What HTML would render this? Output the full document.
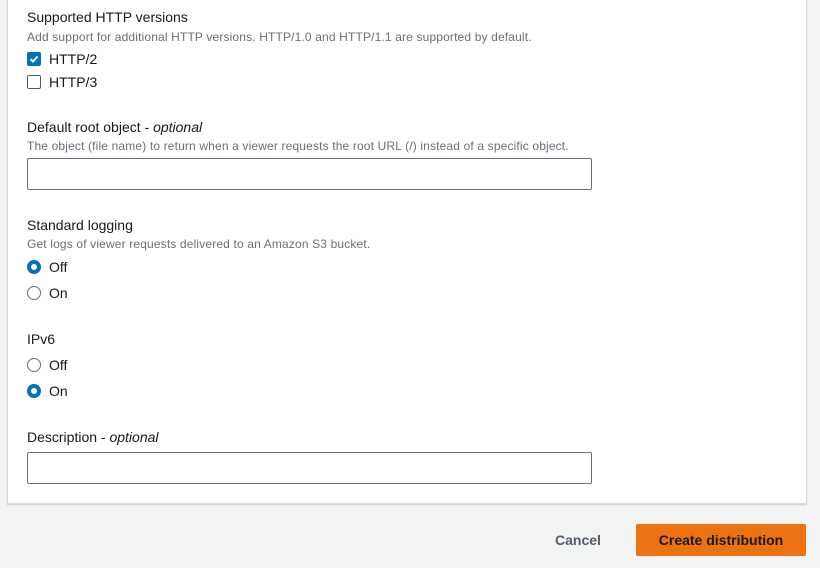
<!DOCTYPE html>
<html><head><style>
body{margin:0;width:820px;height:568px;background:#f2f3f3;font-family:"Liberation Sans",sans-serif;position:relative;overflow:hidden;color:#16191f}
.card{position:absolute;left:7px;top:-2px;width:798px;height:505px;background:#fff;border:1px solid #d5dbdb;border-top:none;box-shadow:0 1px 1px rgba(0,0,0,.15)}
.t{position:absolute;left:27px;font-size:14px;color:#16191f}
.d{position:absolute;left:27px;font-size:12px;color:#687078;letter-spacing:0.15px}
.l{position:absolute;left:49px;font-size:14px}
.cb{position:absolute;left:27px;width:12px;height:12px;border:1px solid #545b64;border-radius:2px;background:#fff}
.cb.on{background:#0073bb;border-color:#0073bb}
.rd{position:absolute;left:27px;width:12px;height:12px;border:1px solid #687078;border-radius:50%;background:#fff}
.rd.on{border:4px solid #0073bb;width:6px;height:6px}
.in{position:absolute;left:27px;width:563px;height:30px;border:1px solid #687078;border-radius:2px;background:#fff}
i{font-style:italic}
</style></head><body>
<div class="card"></div>
<div class="t" style="top:9px">Supported HTTP versions</div>
<div class="d" style="top:30px">Add support for additional HTTP versions. HTTP/1.0 and HTTP/1.1 are supported by default.</div>
<div class="cb on" style="top:52px"><svg width="12" height="12" viewBox="0 0 12 12" style="position:absolute;left:0;top:0"><path d="M2.5 6.2 L5 8.6 L9.6 3.4" stroke="#fff" stroke-width="2" fill="none"/></svg></div>
<div class="l" style="top:51px">HTTP/2</div>
<div class="cb" style="top:75px"></div>
<div class="l" style="top:74px">HTTP/3</div>
<div class="t" style="top:119px">Default root object - <i>optional</i></div>
<div class="d" style="top:139px">The object (file name) to return when a viewer requests the root URL (/) instead of a specific object.</div>
<div class="in" style="top:158px"></div>
<div class="t" style="top:217px">Standard logging</div>
<div class="d" style="top:237px">Get logs of viewer requests delivered to an Amazon S3 bucket.</div>
<div class="rd on" style="top:260px"></div><div class="l" style="top:259px">Off</div>
<div class="rd" style="top:286px"></div><div class="l" style="top:285px">On</div>
<div class="t" style="top:331px">IPv6</div>
<div class="rd" style="top:358px"></div><div class="l" style="top:357px">Off</div>
<div class="rd on" style="top:384px"></div><div class="l" style="top:383px">On</div>
<div class="t" style="top:429px">Description - <i>optional</i></div>
<div class="in" style="top:452px"></div>
<div style="position:absolute;left:555px;top:532px;font-size:14px;font-weight:bold;color:#545b64">Cancel</div>
<div style="position:absolute;left:636px;top:524px;width:170px;height:32px;background:#ec7211;border-radius:2px;font-size:14px;font-weight:bold;color:#16191f;text-align:center;line-height:32px">Create distribution</div>
</body></html>
